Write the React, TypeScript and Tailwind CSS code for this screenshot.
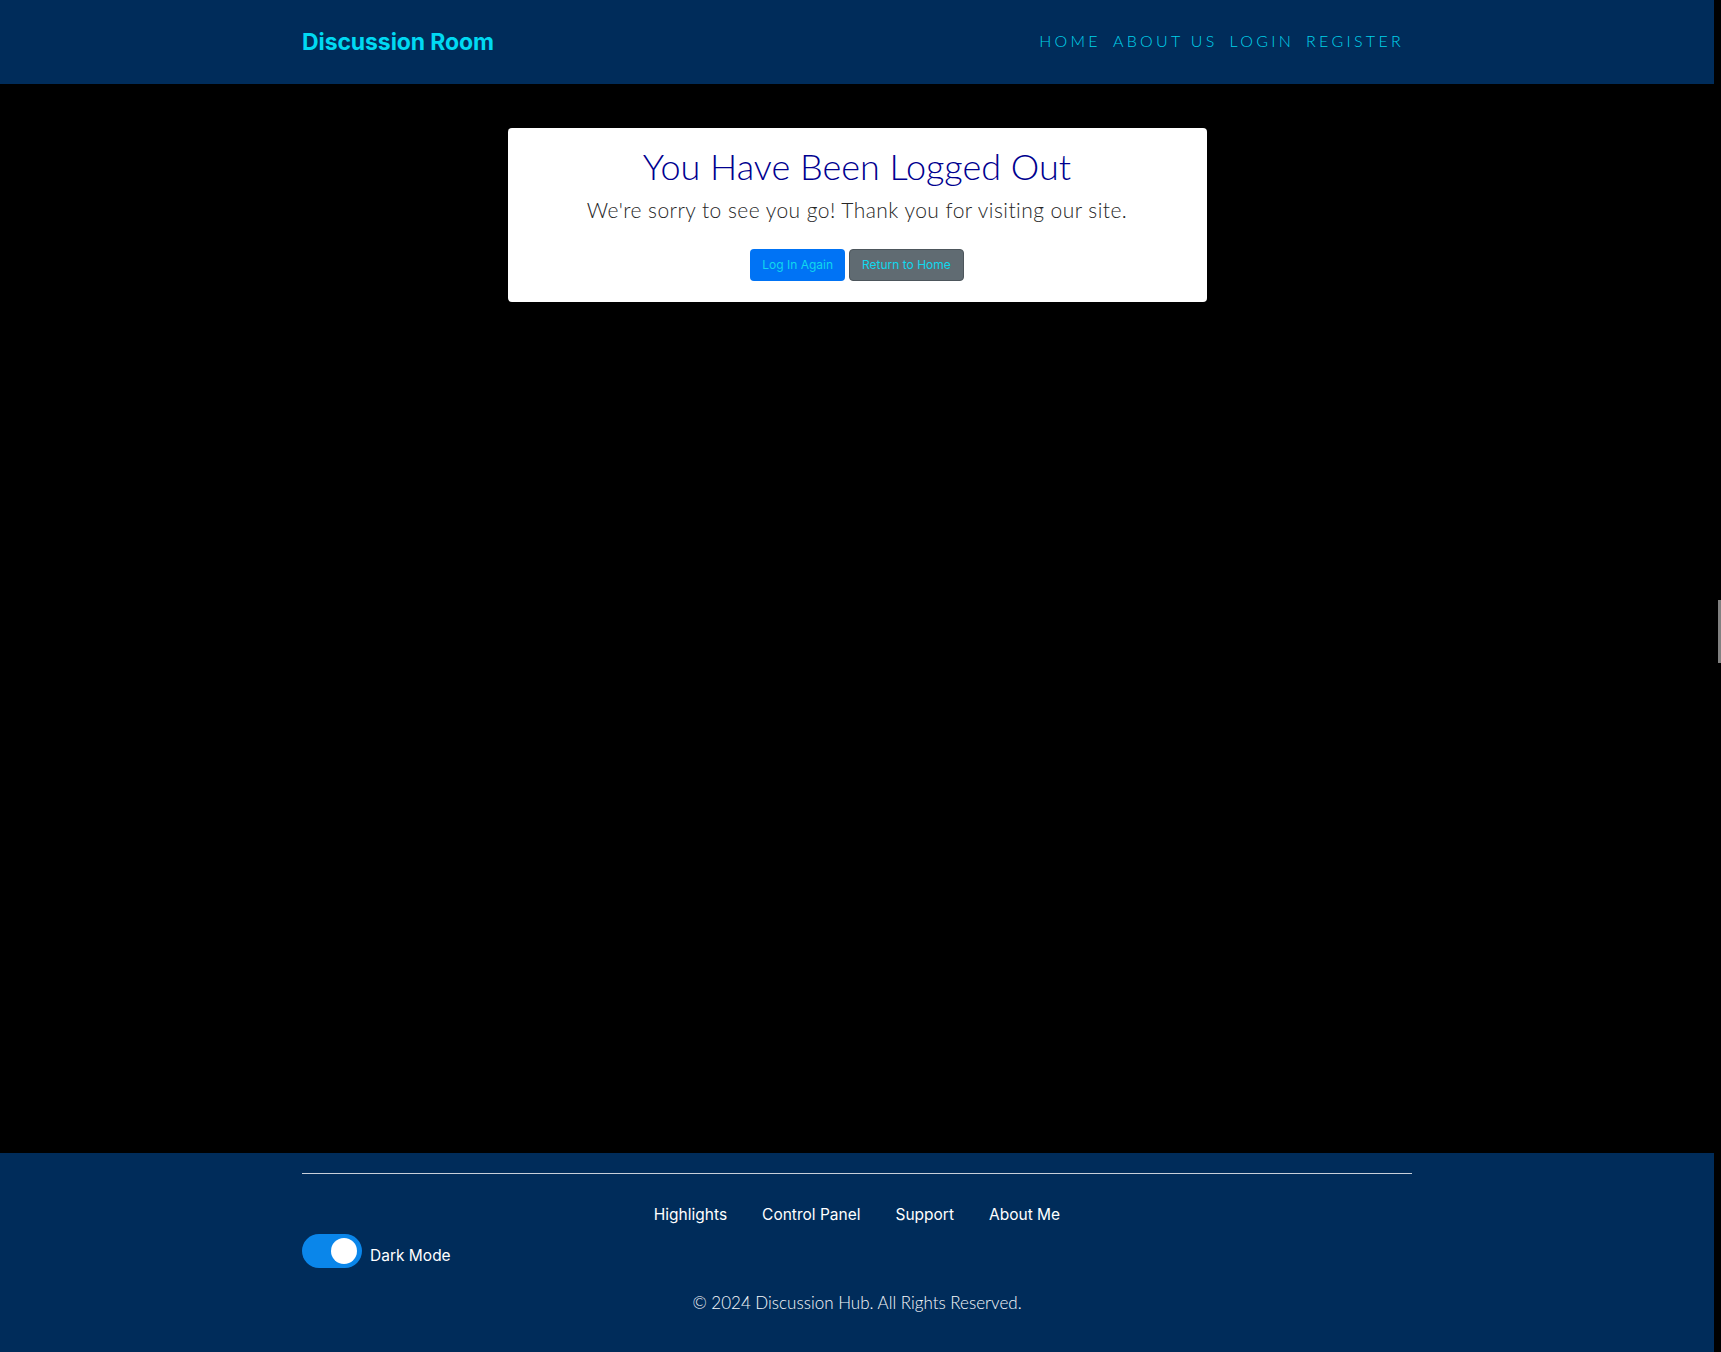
import React from "react";

const navLinks = ["HOME", "ABOUT US", "LOGIN", "REGISTER"];
const footerLinks = ["Highlights", "Control Panel", "Support", "About Me"];

function Header() {
  return (
    <header className="h-[84px] bg-[#002c5a]">
      <div className="mx-auto flex h-full w-[1110px] items-center justify-between">
        <a className="font-['Inter',sans-serif] text-[23px] font-bold tracking-[-0.1px] text-[#00d9f2]">
          Discussion Room
        </a>
        <nav className="mb-[2px] mr-[8px] flex items-center gap-[12px] font-['Lato',sans-serif] text-[16px] font-light tracking-[3.3px] text-[#00d2ea]">
          {navLinks.map((l) => (
            <a key={l}>{l}</a>
          ))}
        </nav>
      </div>
    </header>
  );
}

function LogoutCard() {
  return (
    <div className="mx-auto mt-[44px] flex w-[699px] flex-col items-center rounded-[4px] bg-white pb-[21px] pt-[14px]">
      <h1 className="font-['Lato',sans-serif] text-[36px] font-light leading-[48px] text-[#00008f]">
        You Have Been Logged Out
      </h1>
      <p className="mt-[5px] font-['Lato',sans-serif] text-[21px] font-light leading-[30px] tracking-[0.45px] text-[#262626]">
        We're sorry to see you go! Thank you for visiting our site.
      </p>
      <div className="mt-[24px] flex gap-[4px] font-['Inter',sans-serif] text-[12px] text-[#10d8ee]">
        <button className="h-[32px] rounded-[4px] bg-[#0073f5] px-[12px]">Log In Again</button>
        <button className="h-[32px] rounded-[4px] border border-[#4d565c] bg-[#606b72] px-[12px]">
          Return to Home
        </button>
      </div>
    </div>
  );
}

function Footer() {
  return (
    <footer className="h-[199px] bg-[#002c5a] pt-[20px]">
      <div className="mx-auto w-[1110px]">
        <hr className="border-t border-[#c8d0da]" />
        <div className="mt-[29px] flex justify-center gap-[35px] font-['Inter',sans-serif] text-[15.5px] text-white">
          {footerLinks.map((l) => (
            <a key={l}>{l}</a>
          ))}
        </div>
        <div className="mt-[8px] flex items-center gap-[8px]">
          <div className="flex h-[34px] w-[60px] items-center justify-end rounded-full bg-[#0a86ea] pr-[5px]">
            <div className="h-[26px] w-[26px] rounded-full bg-white" />
          </div>
          <span className="mt-[8px] font-['Inter',sans-serif] text-[15.5px] text-white">Dark Mode</span>
        </div>
        <p className="mt-[22px] text-center font-['Lato',sans-serif] text-[17px] font-light text-[#f6f8fb]">
          © 2024 Discussion Hub. All Rights Reserved.
        </p>
      </div>
    </footer>
  );
}

export default function App() {
  return (
    <div className="flex h-[1352px] w-[1721px] bg-black">
      <div className="flex w-[1714px] flex-col">
        <Header />
        <main className="flex-1">
          <LogoutCard />
        </main>
        <Footer />
      </div>
      <div className="w-[7px] pl-[4px] pt-[600px]">
        <div className="h-[63px] w-[3px] bg-[#808080]" />
      </div>
    </div>
  );
}
